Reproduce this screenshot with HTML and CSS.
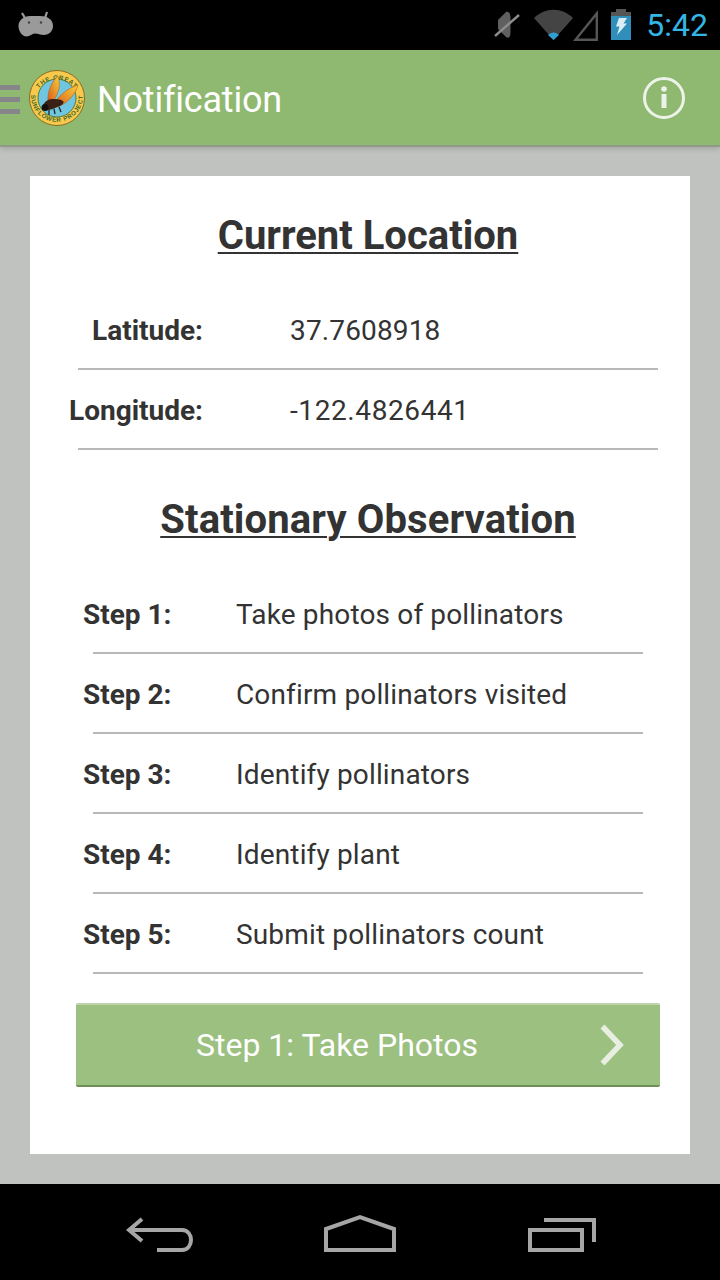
FILE: index.html
```html
<!DOCTYPE html>
<html lang="en">
<head>
<meta charset="utf-8">
<title>Notification</title>
<link rel="stylesheet" href="styles.css">
</head>
<body>
<div class="screen">
  <header class="statusbar">
    <svg class="droid" width="36" height="28" viewBox="0 0 36 28">
      <path d="M4 2l3 5M29 1l-2 6" stroke="#9a9a9a" stroke-width="2.2" fill="none"/>
      <path d="M0.500 15C0.500 9 6 5 12 5h10c7 0 13 3 13 10 0 5-4 9-9 9-4 0-6-1.500-9-1.500S12 25.500 8.500 25.500C4 25.500 0.500 20 0.500 15z" fill="#9a9a9a"/>
      <circle cx="11" cy="11.500" r="1.200" fill="#444"/><circle cx="23" cy="11.500" r="1.200" fill="#444"/>
    </svg>
    <div class="status-right">
      <svg class="mute" width="28" height="32" viewBox="0 0 28 32">
        <path d="M5 11l8-8c3-1.500 4.500 2 4.500 6v14c0 5-2 7-4.500 5l-8-8z" fill="#5f5f5f"/>
        <path d="M2 27L26 6" stroke="#8c8c8c" stroke-width="2.400"/>
      </svg>
      <svg class="signal" width="66" height="32" viewBox="0 0 66 32">
        <path d="M1 9C12-2 29-2 40 9L20.500 31z" fill="#444"/>
        <path d="M15 26C18 22.500 23 22.500 26 26L20.500 31z" fill="#2f9fd0"/>
        <path d="M42.500 30.800L63.800 4.500V30.800z" fill="none" stroke="#555" stroke-width="2.400"/>
      </svg>
      <svg class="battery" width="20" height="32" viewBox="0 0 20 32">
        <path d="M5 0h10v3H5z" fill="#555"/>
        <path d="M0 3h20v4H0z" fill="#555"/>
        <path d="M0 7h20v24H0z" fill="#2f8fba"/>
        <path d="M8 9h8l-3.500 5.500H16L6 26l2.500-8.500H5z" fill="#dbeef5"/>
      </svg>
      <span class="clock">5:42</span>
    </div>
  </header>

  <div class="actionbar">
    <div class="hamburger"><i></i><i></i><i></i></div>
    <svg class="logo" width="58" height="58" viewBox="0 0 58 58">
      <defs>
        <linearGradient id="wing" x1="0" y1="1" x2="1" y2="0">
          <stop offset="0" stop-color="#d9581c"/>
          <stop offset="1" stop-color="#f8cf3a"/>
        </linearGradient>
        <path id="ring-top" d="M6.500 31A22.600 22.600 0 0 1 51.500 31"/>
        <path id="ring-bottom" d="M3 27A26 26 0 0 0 55 27"/>
      </defs>
      <circle cx="29" cy="29" r="27.500" fill="#f8c94c" stroke="#8a6a20" stroke-width="1"/>
      <circle cx="29" cy="29" r="19" fill="#6fc6e0" stroke="#4f7a3a" stroke-width="1"/>
      <text class="ring-text"><textPath href="#ring-top" startOffset="50%" text-anchor="middle">THE GREAT</textPath></text>
      <text class="ring-text"><textPath href="#ring-bottom" startOffset="50%" text-anchor="middle">SUNFLOWER PROJECT</textPath></text>
      <path d="M20 33C19 22 24 12 30 7 33 15 31 26 24 33z" fill="url(#wing)" stroke="#a8651a" stroke-width=".6"/>
      <path d="M25 36C31 26 40 19 50 16 47 27 38 35 29 38z" fill="url(#wing)" stroke="#b0601a" stroke-width=".6"/>
      <path d="M15 37C16 33 20 30 24 30c4 0 8 0 11 2 2 2-2 5-6 6-3 2-7 3-9 3-3 1-6-1-5-4z" fill="#3a2116"/>
      <circle cx="17" cy="38.500" r="3.500" fill="#15100e"/>
      <path d="M21 41l0 5M26 40l1 5M31 38l2 5" stroke="#222" stroke-width="1.300"/>
    </svg>
    <h1 class="title">Notification</h1>
    <svg class="info" width="42" height="42" viewBox="0 0 42 42">
      <circle cx="21" cy="21" r="19.500" fill="none" stroke="#eef3ea" stroke-width="3"/>
      <rect x="18.500" y="17" width="5" height="14" fill="#eef3ea"/>
      <circle cx="21" cy="12" r="2.800" fill="#eef3ea"/>
    </svg>
  </div>

  <main class="content">
    <section class="card">
      <h2 class="heading heading-first">Current Location</h2>
      <div class="rows rows-location">
        <div class="row"><span class="label">Latitude:</span><span class="value">37.7608918</span></div>
        <div class="row"><span class="label">Longitude:</span><span class="value value-wide">-122.4826441</span></div>
      </div>
      <h2 class="heading heading-second">Stationary Observation</h2>
      <div class="rows rows-steps">
        <div class="row"><span class="label">Step 1:</span><span class="value">Take photos of pollinators</span></div>
        <div class="row"><span class="label">Step 2:</span><span class="value">Confirm pollinators visited</span></div>
        <div class="row"><span class="label">Step 3:</span><span class="value">Identify pollinators</span></div>
        <div class="row"><span class="label">Step 4:</span><span class="value">Identify plant</span></div>
        <div class="row"><span class="label">Step 5:</span><span class="value">Submit pollinators count</span></div>
      </div>
      <button class="next" type="button">
        <span class="next-label">Step 1: Take Photos</span>
        <svg class="chevron" width="24" height="42" viewBox="0 0 24 42">
          <path d="M2.500 2.500L20 21 2.500 39.500" fill="none" stroke="#e8eee2" stroke-width="5.500"/>
        </svg>
      </button>
    </section>
  </main>

  <nav class="navbar">
    <svg width="68" height="40" viewBox="0 0 68 40">
      <path d="M16 7L3 18l13 11M3 18H56C68 18 68 38 56 38H31" fill="none" stroke="#a6a6a6" stroke-width="4"/>
    </svg>
    <svg width="74" height="40" viewBox="0 0 74 40">
      <path d="M2 38V17L36 5l34 12v21z" fill="none" stroke="#a6a6a6" stroke-width="4"/>
    </svg>
    <svg width="70" height="40" viewBox="0 0 70 40">
      <path d="M3 18h52v20H3zM17 8H67V30" fill="none" stroke="#a6a6a6" stroke-width="4"/>
    </svg>
  </nav>
</div>
</body>
</html>
```
FILE: styles.css
```css
* { box-sizing: border-box; }
html, body { margin: 0; padding: 0; }
body { font-family: Roboto, "Liberation Sans", sans-serif; background: #000; }
.screen { width: 720px; height: 1280px; display: flex; flex-direction: column; overflow: hidden; }

.statusbar { height: 50px; background: #000; display: flex; align-items: center; justify-content: space-between; padding-left: 18px; flex: none; }
.status-right { display: flex; align-items: center; padding-right: 12px; }
.mute { margin-right: 12px; }
.signal { margin-right: 12px; }
.battery { margin-right: 15px; }
.clock { color: #33b5e5; font-size: 32px; line-height: 50px; }

.actionbar { height: 97px; background: #8fb971; border-bottom: 2px solid #8f9a88; box-shadow: 0 2px 5px rgba(0, 0, 0, .14); display: flex; align-items: center; flex: none; position: relative; }
.hamburger { width: 20px; display: flex; flex-direction: column; gap: 7px; margin: 3px 8px 0 0; }
.hamburger i { display: block; height: 5px; background: #85858a; }
.logo { margin-right: 12px; }
.ring-text { font-family: "Liberation Sans", sans-serif; font-size: 6.200px; font-weight: 700; fill: #3f6a2a; letter-spacing: .7px; }
.title { margin: 4px 0 0 -1px; flex: 1; font-size: 36px; font-weight: 400; letter-spacing: -.2px; color: #fff; line-height: 44px; }
.info { margin-right: 35px; }

.content { flex: 1; background: #c0c2bf; padding: 29px 30px 30px; display: flex; min-height: 0; }
.card { flex: 1; background: #fff; padding-left: 16px; display: flex; flex-direction: column; align-items: center; color: #333; }

.heading { margin: 0; font-size: 40px; font-weight: 700; line-height: 46px; text-decoration: underline; text-decoration-thickness: 2px; text-underline-offset: 3px; color: #333; }
.heading-first { margin-top: 37px; }
.heading-second { margin-top: 47px; letter-spacing: .12px; }

.rows { display: flex; flex-direction: column; }
.row { height: 80px; display: flex; align-items: center; padding-top: 2px; border-bottom: 2px solid #b8b8b8; font-size: 28px; }
.label { font-weight: 700; color: #333; }
.value { font-weight: 400; color: #333; letter-spacing: .15px; }
.value-wide { letter-spacing: .6px; }

.rows-location { width: 580px; margin-top: 31px; }
.rows-location .label { width: 135px; margin-left: -10px; text-align: right; flex: none; }
.rows-location .value { margin-left: 87px; }

.rows-steps { width: 550px; margin-top: 31px; }
.rows-steps .label { width: 153px; margin-left: -10px; flex: none; }

.next { margin-top: 29px; width: 584px; height: 84px; border: 0; border-top: 2px solid #bcd4a8; border-bottom: 2px solid #6f8f58; border-radius: 2px; background: #9bc080; color: #fff; font: inherit; font-size: 32px; display: flex; align-items: center; padding: 0 36px 0 120px; }
.next-label { flex: 1; text-align: left; white-space: nowrap; }

.navbar { height: 96px; background: #000; display: flex; align-items: center; justify-content: space-between; padding: 0 123px 0 126px; flex: none; }
```
